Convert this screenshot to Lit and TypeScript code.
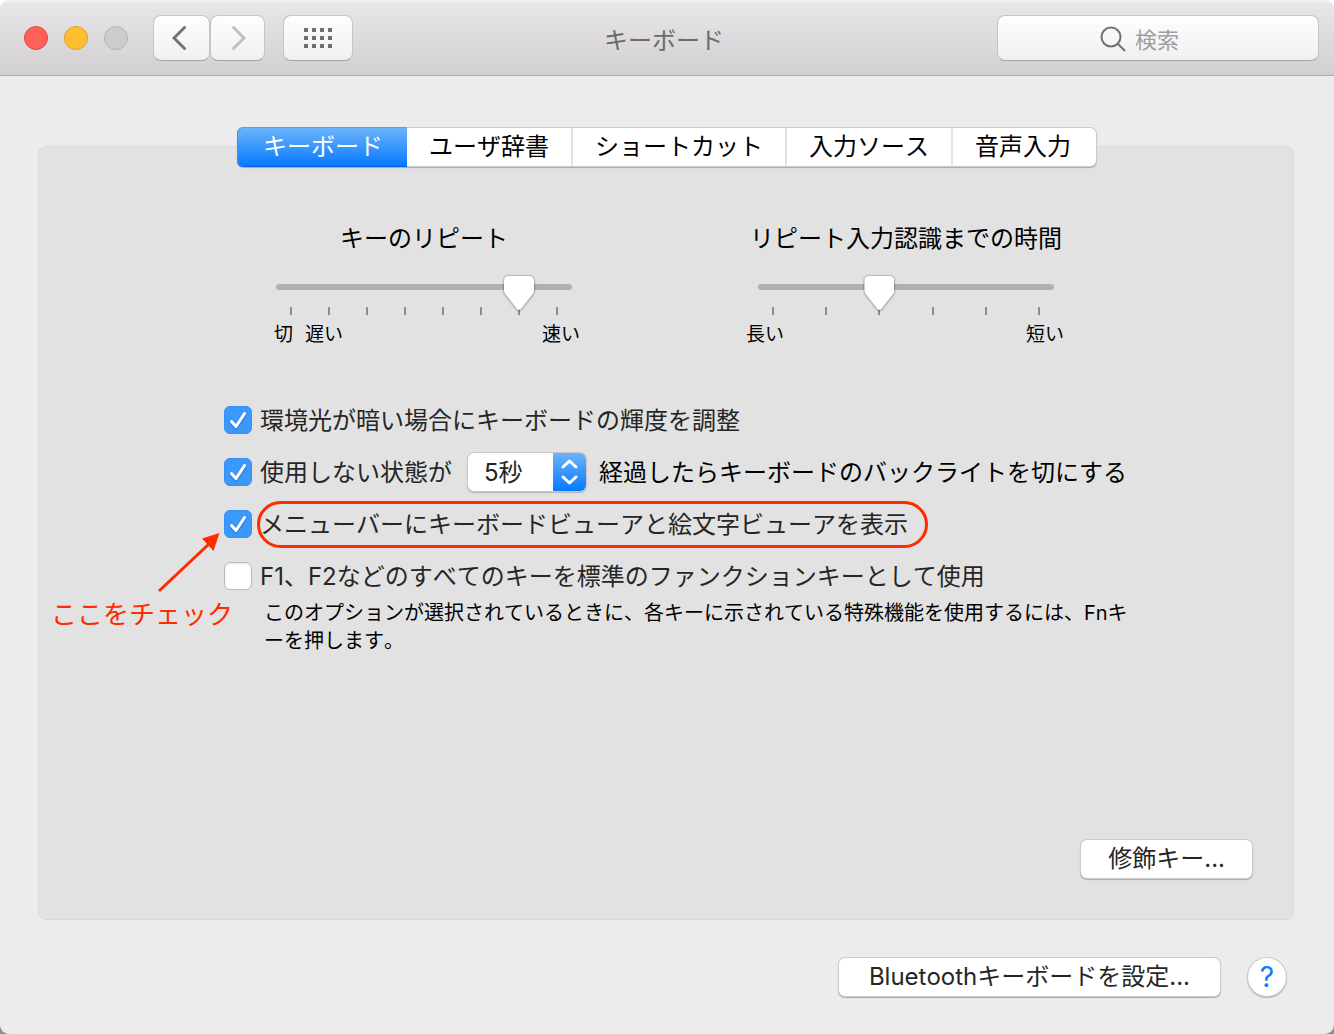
import { LitElement, html, css, svg } from "lit";
import { customElement, property, state } from "lit/decorators.js";
import { classMap } from "lit/directives/class-map.js";

const TABS = ["キーボード", "ユーザ辞書", "ショートカット", "入力ソース", "音声入力"];

/** Slider with tick marks and captions under its ends. */
@customElement("tick-slider")
export class TickSlider extends LitElement {
  static styles = css`
    :host {
      display: flex;
      flex-direction: column;
      width: 296px;
    }
    .title {
      align-self: center;
      font-size: 24px;
      line-height: 32px;
      white-space: nowrap;
    }
    .rail {
      display: grid;
      margin-top: 20px;
      z-index: 1;
    }
    .track,
    .range {
      grid-area: 1 / 1;
    }
    .track {
      height: 6px;
      margin-top: 9px;
      border-radius: 3px;
      background: #b0b0b0;
    }
    .range {
      appearance: none;
      width: 100%;
      height: 35px;
      margin: 0;
      background: transparent;
      filter: drop-shadow(0 0 1px rgba(0, 0, 0, 0.45)) drop-shadow(0 1px 1px rgba(0, 0, 0, 0.15));
    }
    .range::-webkit-slider-runnable-track {
      height: 35px;
      background: transparent;
    }
    .range::-webkit-slider-thumb {
      appearance: none;
      width: 30px;
      height: 35px;
      background: #fff;
      clip-path: path("M5 1H25Q30 1 30 6V15Q30 18 28 20L17 34Q15 36 13 34L2 20Q0 18 0 15V6Q0 1 5 1Z");
    }
    .ticks {
      display: flex;
      justify-content: space-between;
      margin-top: -3px;
      padding: 0 14px;
    }
    .tick {
      width: 2px;
      height: 8px;
      background: #8c8c8c;
    }
    .captions {
      display: flex;
      gap: 12px;
      margin: 6px -10px 0 -12px;
      font-size: 19px;
      line-height: 28px;
    }
    .captions.off {
      margin: 6px -8px 0 -2px;
    }
    .last {
      margin-left: auto;
    }
  `;

  @property() label = "";
  @property({ type: Number }) steps = 2;
  @property({ type: Number }) value = 0;
  @property({ attribute: false }) captions: string[] = [];

  render() {
    const last = this.captions.length - 1;
    return html`
      <label class="title" for="range">${this.label}</label>
      <div class="rail">
        <div class="track"></div>
        <input id="range" class="range" type="range" min="0" max=${this.steps - 1} step="1" .value=${String(this.value)} />
      </div>
      <div class="ticks">${Array.from({ length: this.steps }, () => html`<span class="tick"></span>`)}</div>
      <div class=${classMap({ captions: true, off: this.captions.length > 2 })}>
        ${this.captions.map((c, i) => html`<span class=${i === last ? "last" : ""}>${c}</span>`)}
      </div>
    `;
  }
}

@customElement("app-root")
export class AppRoot extends LitElement {
  static styles = css`
    :host {
      display: block;
      background: linear-gradient(#fff 50%, #8e8e8e 50%);
      color: #000;
      font-family: Inter, "Noto Sans CJK JP", sans-serif;
      font-size: 24px;
      font-kerning: none;
      line-height: 32px;
    }
    * {
      box-sizing: border-box;
    }
    button,
    input,
    select {
      font: inherit;
      font-kerning: none;
      color: inherit;
      margin: 0;
    }
    .window {
      display: flex;
      flex-direction: column;
      min-height: 100vh;
      border-radius: 9px;
      overflow: hidden;
      background: #ececec;
    }
    .toolbar {
      display: grid;
      grid-template-columns: 1fr auto 1fr;
      align-items: center;
      height: 76px;
      padding: 0 15px 0 9px;
      border-bottom: 1px solid #aeacae;
      background: linear-gradient(#f4f3f4 0, #e8e6e8 3px, #d1cfd1 100%);
    }
    .tools {
      display: flex;
      align-items: center;
      padding-left: 15px;
    }
    .lights {
      display: flex;
      gap: 16px;
      margin-right: 25px;
    }
    .light {
      width: 24px;
      height: 24px;
      padding: 0;
      border: 1px solid #e2463f;
      border-radius: 50%;
      background: #ff6159;
    }
    .light.min {
      border-color: #dfa023;
      background: #ffbf2f;
    }
    .light.zoom {
      border-color: #b4b3b4;
      background: #cdcccd;
    }
    .tool {
      display: grid;
      place-items: center;
      width: 57px;
      height: 46px;
      padding: 0;
      border: 1px solid #c6c4c6;
      border-bottom-color: #a5a3a5;
      border-radius: 8px;
      background: linear-gradient(#fefefe, #f0f0f0);
    }
    .tool.forward {
      width: 55px;
    }
    .tool.all {
      width: 70px;
      margin-left: 18px;
    }
    .title {
      margin: 0;
      padding-top: 6px;
      color: #6a6a6a;
      font-size: 24px;
      font-weight: 400;
    }
    .search {
      justify-self: end;
      display: flex;
      align-items: center;
      gap: 9px;
      width: 322px;
      height: 46px;
      padding-left: 102px;
      border: 1px solid #c6c4c6;
      border-bottom-color: #a5a3a5;
      border-radius: 8px;
      background: linear-gradient(#fefefe, #f0f0f0);
      font-size: 22px;
    }
    .search svg {
      flex: none;
      margin-top: 2px;
    }
    .query {
      flex: 1;
      min-width: 0;
      height: 40px;
      padding: 4px 0 0;
      border: 0;
      outline: 0;
      background: transparent;
    }
    .query::placeholder {
      color: #9e9e9e;
      opacity: 1;
    }
    .content {
      flex: 1;
      display: flex;
      flex-direction: column;
      padding: 70px 40px 38px 38px;
    }
    .panel {
      flex: 1;
      display: flex;
      flex-direction: column;
      border: 1px solid #dadada;
      border-radius: 8px;
      background: #e2e2e2;
    }
    .tabs {
      align-self: center;
      display: flex;
      height: 38px;
      margin: -19px 0 0 2px;
      border-radius: 6px;
      background: #fff;
      box-shadow: 0 0 0 1px #cbcbcb, 0 1px 1px 1px #a9a9a9;
    }
    .tab {
      padding: 0 22px;
      border: 0;
      border-right: 2px solid #e3e3e3;
      background: transparent;
      white-space: nowrap;
    }
    .tab:last-child {
      border-right: 0;
      padding-right: 25px;
    }
    .tab.active {
      padding: 0 24px 0 25px;
      border: 0;
      border-radius: 6px 0 0 6px;
      color: #fff;
      background: linear-gradient(#6cb3fa, #067aff);
      box-shadow: -1px 0 0 #3f8fea, -1px -1px 0 #5a9fe8, 0 -1px 0 #5a9fe8, -1px 1px 0 #0a62e0, 0 1px 0 #0a62e0;
    }
    .sliders {
      display: flex;
      justify-content: center;
      gap: 186px;
      margin-top: 57px;
      padding-right: 2px;
    }
    .options {
      display: flex;
      flex-direction: column;
      gap: 12px;
      margin-top: 51px;
      padding: 0 40px 0 185px;
    }
    .option {
      position: relative;
      display: flex;
      align-items: center;
      height: 40px;
      white-space: nowrap;
    }
    .choice {
      display: flex;
      align-items: center;
      gap: 8px;
      color: #262626;
    }
    .text {
      padding-top: 2px;
    }
    .box {
      display: grid;
      flex: none;
    }
    .check,
    .mark {
      grid-area: 1 / 1;
    }
    .check {
      appearance: none;
      width: 28px;
      height: 28px;
      border: 1px solid #b9b9b9;
      border-radius: 6px;
      background: #fff;
      box-shadow: inset 0 1px 2px rgba(0, 0, 0, 0.1);
    }
    .check:checked {
      border-color: #3590f8;
      background: #3b99fc;
      box-shadow: none;
    }
    .mark {
      pointer-events: none;
      visibility: hidden;
      filter: drop-shadow(0 1px 1px rgba(0, 40, 120, 0.35));
    }
    .check:checked + .mark {
      visibility: visible;
    }
    .popup {
      display: grid;
      width: 118px;
      height: 38px;
      margin: 0 13px 0 16px;
      border-radius: 6px;
      overflow: hidden;
      background: #fff;
      box-shadow: 0 0 0 1px #c9c9c9, 0 1px 1px 1px #b4b4b4;
    }
    .delay {
      grid-area: 1 / 1;
      appearance: none;
      padding: 2px 40px 0 16px;
      border: 0;
      outline: 0;
      background: transparent;
      color: #262626;
    }
    .stepper {
      grid-area: 1 / 1;
      justify-self: end;
      width: 33px;
      height: 38px;
      pointer-events: none;
      background: linear-gradient(#6cb3fa, #067aff);
    }
    .hint {
      margin: -9px 0 0 40px;
      font-size: 20px;
      line-height: 28px;
    }
    .ring {
      position: absolute;
      left: 33px;
      top: -3px;
      width: 671px;
      height: 47px;
      border: 3px solid #ff2a00;
      border-radius: 24px;
      pointer-events: none;
    }
    .arrow {
      position: absolute;
      left: -70px;
      top: 24px;
    }
    .note {
      position: absolute;
      left: -173px;
      top: 95px;
      color: #ff2a00;
      font-size: 26px;
    }
    .push {
      height: 38px;
      padding: 0 27px;
      border: 0;
      border-radius: 6px;
      background: #fff;
      color: #262626;
      box-shadow: 0 0 0 1px #cbcbcb, 0 1px 1px 1px #a9a9a9;
      white-space: nowrap;
    }
    .modifier {
      align-self: flex-end;
      margin: auto 41px 41px 0;
    }
    .footer {
      display: flex;
      justify-content: flex-end;
      align-items: center;
      gap: 28px;
      padding: 38px 8px 0 0;
    }
    .footer .push {
      padding: 0 30px;
    }
    .help {
      width: 38px;
      height: 38px;
      padding: 0;
      border: 0;
      border-radius: 50%;
      background: #fff;
      color: #0a7dff;
      font-size: 28px;
      box-shadow: 0 0 0 1px #cbcbcb, 0 1px 1px 1px #b0b0b0;
    }
  `;

  @state() private active = 0;

  private checkbox(id: string, label: string, checked: boolean) {
    return html`
      <label class="choice" for=${id}>
        <span class="box">
          <input id=${id} class="check" type="checkbox" .checked=${checked} />
          <svg class="mark" width="28" height="28" viewBox="0 0 28 28" fill="none" stroke="#fff" stroke-width="3" stroke-linecap="round" stroke-linejoin="round" aria-hidden="true">
            <path d="M7.500 15.500L12 20.500L20.500 7.500" />
          </svg>
        </span>
        <span class="text">${label}</span>
      </label>
    `;
  }

  private gridDots() {
    return [0, 8, 16].flatMap((y) => [0, 8, 16, 24].map((x) => svg`<rect x=${x} y=${y} width="4" height="4" />`));
  }

  render() {
    return html`
      <div class="window">
        <header class="toolbar">
          <div class="tools">
            <div class="lights">
              <button class="light" aria-label="閉じる"></button>
              <button class="light min" aria-label="しまう"></button>
              <button class="light zoom" aria-label="拡大" disabled></button>
            </div>
            <button class="tool" aria-label="戻る">
              <svg width="20" height="26" viewBox="0 0 20 26" fill="none" stroke="#737373" stroke-width="3" stroke-linecap="round"><path d="M12.500 2.500L2 13L12.500 23.500" /></svg>
            </button>
            <button class="tool forward" aria-label="進む" disabled>
              <svg width="20" height="26" viewBox="0 0 20 26" fill="none" stroke="#c0c0c0" stroke-width="3" stroke-linecap="round"><path d="M5.500 2.500L16 13L5.500 23.500" /></svg>
            </button>
            <button class="tool all" aria-label="すべてを表示">
              <svg width="28" height="20" viewBox="0 0 28 20" fill="#6e6e6e">${this.gridDots()}</svg>
            </button>
          </div>
          <h1 class="title">キーボード</h1>
          <label class="search">
            <svg width="26" height="26" viewBox="0 0 26 26" fill="none" stroke="#707070" stroke-width="2" aria-hidden="true">
              <circle cx="11" cy="11" r="9.500" /><path d="M17.500 17.500L25 25" />
            </svg>
            <input class="query" type="text" placeholder="検索" aria-label="検索" />
          </label>
        </header>

        <main class="content">
          <section class="panel">
            <div class="tabs" role="tablist">
              ${TABS.map(
                (t, i) => html`<button
                  class=${classMap({ tab: true, active: i === this.active })}
                  role="tab"
                  aria-selected=${i === this.active}
                  @click=${() => (this.active = i)}
                >${t}</button>`
              )}
            </div>

            <div class="sliders">
              <tick-slider label="キーのリピート" steps="8" value="6" .captions=${["切", "遅い", "速い"]}></tick-slider>
              <tick-slider label="リピート入力認識までの時間" steps="6" value="2" .captions=${["長い", "短い"]}></tick-slider>
            </div>

            <div class="options">
              <div class="option">${this.checkbox("ambient", "環境光が暗い場合にキーボードの輝度を調整", true)}</div>
              <div class="option">
                ${this.checkbox("idle", "使用しない状態が", true)}
                <span class="popup">
                  <select id="delay" class="delay" aria-label="時間">
                    <option>5秒</option>
                  </select>
                  <svg class="stepper" viewBox="0 0 33 38" fill="none" stroke="#fff" stroke-width="3" stroke-linecap="round" stroke-linejoin="round" aria-hidden="true">
                    <path d="M10 14L16.500 8L23 14M10 24L16.500 30L23 24" />
                  </svg>
                </span>
                <label class="text" for="delay">経過したらキーボードのバックライトを切にする</label>
              </div>
              <div class="option">
                ${this.checkbox("viewer", "メニューバーにキーボードビューアと絵文字ビューアを表示", true)}
                <span class="ring"></span>
                <svg class="arrow" width="70" height="68" viewBox="0 0 70 68" aria-hidden="true">
                  <path d="M5 63L55 16" stroke="#ff2a00" stroke-width="3" />
                  <path d="M65.500 5L48 10.500L59.500 23Z" fill="#ff2a00" />
                </svg>
                <span class="note">ここをチェック</span>
              </div>
              <div class="option">${this.checkbox("fkeys", "F1、F2などのすべてのキーを標準のファンクションキーとして使用", false)}</div>
              <p class="hint">
                このオプションが選択されているときに、各キーに示されている特殊機能を使用するには、Fnキ<br />ーを押します。
              </p>
            </div>

            <button class="push modifier">修飾キー...</button>
          </section>

          <footer class="footer">
            <button class="push">Bluetoothキーボードを設定...</button>
            <button class="help" aria-label="ヘルプ">?</button>
          </footer>
        </main>
      </div>
    `;
  }
}
